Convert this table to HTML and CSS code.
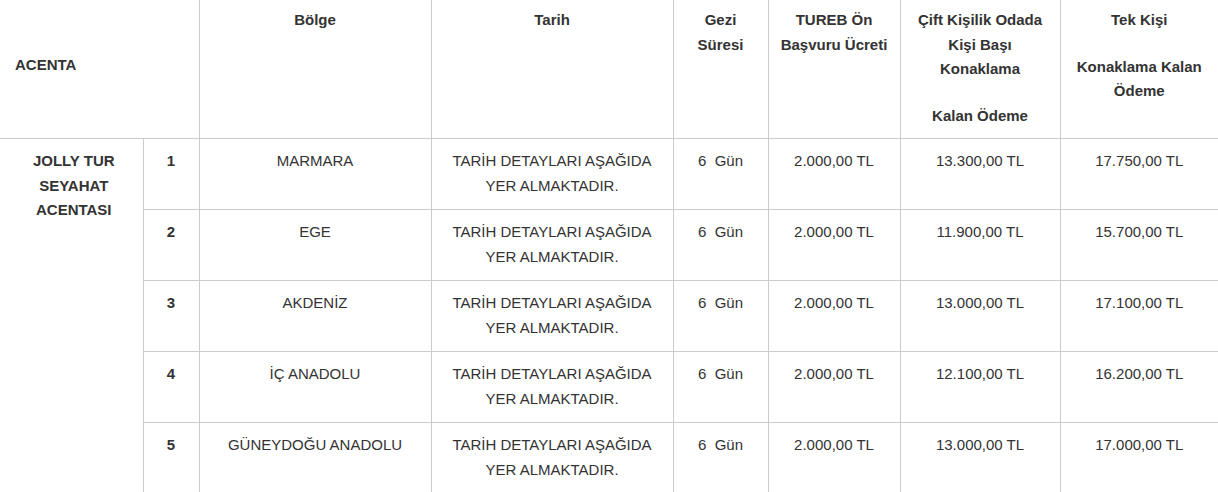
FILE: index.html
```html
<!DOCTYPE html>
<html lang="tr">
<head>
<meta charset="utf-8">
<title>Tur Fiyatları</title>
<link rel="stylesheet" href="styles.css">
</head>
<body>
<table class="price-table">
  <colgroup>
    <col class="c-agency">
    <col class="c-no">
    <col class="c-region">
    <col class="c-date">
    <col class="c-days">
    <col class="c-fee">
    <col class="c-double">
    <col class="c-single">
  </colgroup>
  <thead>
    <tr>
      <th colspan="2" class="agency-head">ACENTA</th>
      <th>Bölge</th>
      <th>Tarih</th>
      <th>Gezi<br>Süresi</th>
      <th>TUREB Ön<br>Başvuru Ücreti</th>
      <th><p>Çift Kişilik Odada<br>Kişi Başı<br>Konaklama</p><p>Kalan Ödeme</p></th>
      <th><p>Tek Kişi</p><p>Konaklama Kalan<br>Ödeme</p></th>
    </tr>
  </thead>
  <tbody>
    <tr>
      <td rowspan="5" class="agency">JOLLY TUR<br>SEYAHAT<br>ACENTASI</td>
      <td class="no">1</td>
      <td>MARMARA</td>
      <td>TARİH DETAYLARI AŞAĞIDA<br>YER ALMAKTADIR.</td>
      <td>6&nbsp; Gün</td>
      <td>2.000,00 TL</td>
      <td>13.300,00 TL</td>
      <td>17.750,00 TL</td>
    </tr>
    <tr>
      <td class="no">2</td>
      <td>EGE</td>
      <td>TARİH DETAYLARI AŞAĞIDA<br>YER ALMAKTADIR.</td>
      <td>6&nbsp; Gün</td>
      <td>2.000,00 TL</td>
      <td>11.900,00 TL</td>
      <td>15.700,00 TL</td>
    </tr>
    <tr>
      <td class="no">3</td>
      <td>AKDENİZ</td>
      <td>TARİH DETAYLARI AŞAĞIDA<br>YER ALMAKTADIR.</td>
      <td>6&nbsp; Gün</td>
      <td>2.000,00 TL</td>
      <td>13.000,00 TL</td>
      <td>17.100,00 TL</td>
    </tr>
    <tr>
      <td class="no">4</td>
      <td>İÇ ANADOLU</td>
      <td>TARİH DETAYLARI AŞAĞIDA<br>YER ALMAKTADIR.</td>
      <td>6&nbsp; Gün</td>
      <td>2.000,00 TL</td>
      <td>12.100,00 TL</td>
      <td>16.200,00 TL</td>
    </tr>
    <tr>
      <td class="no">5</td>
      <td>GÜNEYDOĞU ANADOLU</td>
      <td>TARİH DETAYLARI AŞAĞIDA<br>YER ALMAKTADIR.</td>
      <td>6&nbsp; Gün</td>
      <td>2.000,00 TL</td>
      <td>13.000,00 TL</td>
      <td>17.000,00 TL</td>
    </tr>
  </tbody>
</table>
</body>
</html>
```
FILE: styles.css
```css
html, body {
  margin: 0;
  padding: 0;
  overflow: hidden;
  background: #fff;
}

body {
  font-family: "Liberation Sans", Arial, sans-serif;
  font-size: 15px;
  line-height: 24.5px;
  color: #333;
}

.price-table {
  width: 1218px;
  table-layout: fixed;
  border-collapse: collapse;
  border: hidden;
}

.c-agency { width: 143px; }
.c-no { width: 56px; }
.c-region { width: 232px; }
.c-date { width: 242px; }
.c-days { width: 95px; }
.c-fee { width: 132px; }
.c-double { width: 160px; }
.c-single { width: 158px; }

.price-table th,
.price-table td {
  border: 1px solid #ccc;
  text-align: center;
  vertical-align: top;
}

.price-table th {
  font-weight: bold;
  padding: 8px 4px 10px;
}

.price-table th p {
  margin: 0 0 22px;
}

.price-table th p:last-child {
  margin-bottom: 0;
}

.price-table th.agency-head {
  text-align: left;
  vertical-align: middle;
  padding: 4px 4px 11px 15px;
}

.price-table td {
  padding: 10px 4px 11px;
  height: 49px;
}

.price-table td.agency {
  padding-left: 9px;
  padding-right: 4px;
}

.price-table td.agency,
.price-table td.no {
  font-weight: bold;
}
```
